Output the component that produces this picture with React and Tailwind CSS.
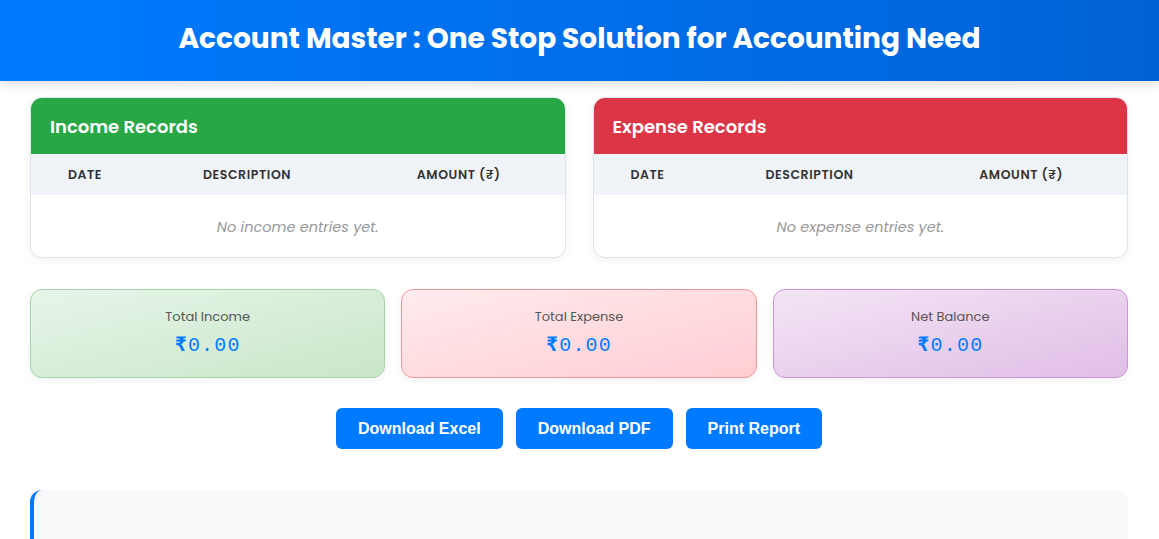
import React from "react";

const font = { fontFamily: "Poppins, Inter, 'Noto Sans', sans-serif" };

function RecordCard({ title, headerClass, empty }) {
  return (
    <div className="flex-1 overflow-hidden rounded-xl border border-[#dfe5ec] bg-white shadow-[0_2px_8px_rgba(0,0,0,0.06)]">
      <div className={`flex h-[56px] items-center px-[19px] ${headerClass}`}>
        <h2 className="text-[18px] font-semibold text-white">{title}</h2>
      </div>
      <div className="grid h-[41px] grid-cols-[108px_216px_1fr] items-center bg-[#f0f4f8] pt-[1px] text-center text-[12.5px] font-semibold uppercase tracking-[0.6px] text-[#333]">
        <div>Date</div>
        <div>Description</div>
        <div className="pr-[2px]">Amount (₹)</div>
      </div>
      <div className="flex h-[62px] items-center justify-center pt-[3px] text-[14.5px] italic text-[#999]">
        {empty}
      </div>
    </div>
  );
}

function SummaryCard({ label, cls }) {
  return (
    <div className={`flex h-[89px] flex-1 flex-col items-center justify-center rounded-xl border shadow-[0_3px_8px_rgba(0,0,0,0.05)] ${cls}`}>
      <div className="mt-[1px] text-[13px] text-[#555]">{label}</div>
      <div
        className="mt-[5px] text-[20px] font-normal tracking-[1.2px] text-[#007bff]"
        style={{ fontFamily: "'Liberation Mono', 'DejaVu Sans Mono', monospace" }}
      >
        <span className="font-bold">₹</span>0.00
      </div>
    </div>
  );
}

export default function App() {
  return (
    <div className="min-h-screen bg-white" style={font}>
      <header className="flex h-[81px] items-center justify-center bg-gradient-to-r from-[#007bff] to-[#0062d6] shadow-[0_4px_10px_rgba(0,0,0,0.12)]">
        <h1 className="pb-[3px] text-[28px] font-bold text-white">
          Account Master : One Stop Solution for Accounting Need
        </h1>
      </header>

      <main className="pl-[30px] pr-[31px] pt-[16px]">
        <div className="flex gap-[27px]">
          <RecordCard title="Income Records" headerClass="bg-[#28a745]" empty="No income entries yet." />
          <RecordCard title="Expense Records" headerClass="bg-[#dc3545]" empty="No expense entries yet." />
        </div>

        <div className="mt-[31px] flex gap-[16px]">
          <SummaryCard label="Total Income" cls="border-[#a5d6a7] bg-gradient-to-br from-[#e8f5e9] to-[#c8e6c9]" />
          <SummaryCard label="Total Expense" cls="border-[#ef9a9a] bg-gradient-to-br from-[#ffebee] to-[#ffcdd2]" />
          <SummaryCard label="Net Balance" cls="border-[#ce93d8] bg-gradient-to-br from-[#f3e5f5] to-[#e1bee7]" />
        </div>

        <div
          className="mt-[30px] flex justify-center gap-[13px]"
          style={{ fontFamily: "'Liberation Sans', Arial, sans-serif" }}
        >
          {["Download Excel", "Download PDF", "Print Report"].map((t) => (
            <button
              key={t}
              className="h-[41px] rounded-md bg-[#007bff] px-[22px] text-[16px] font-bold text-white"
            >
              {t}
            </button>
          ))}
        </div>

        <div className="mt-[41px] h-[120px] rounded-xl border-l-4 border-[#007bff] bg-[#f8f9fa]" />
      </main>
    </div>
  );
}
